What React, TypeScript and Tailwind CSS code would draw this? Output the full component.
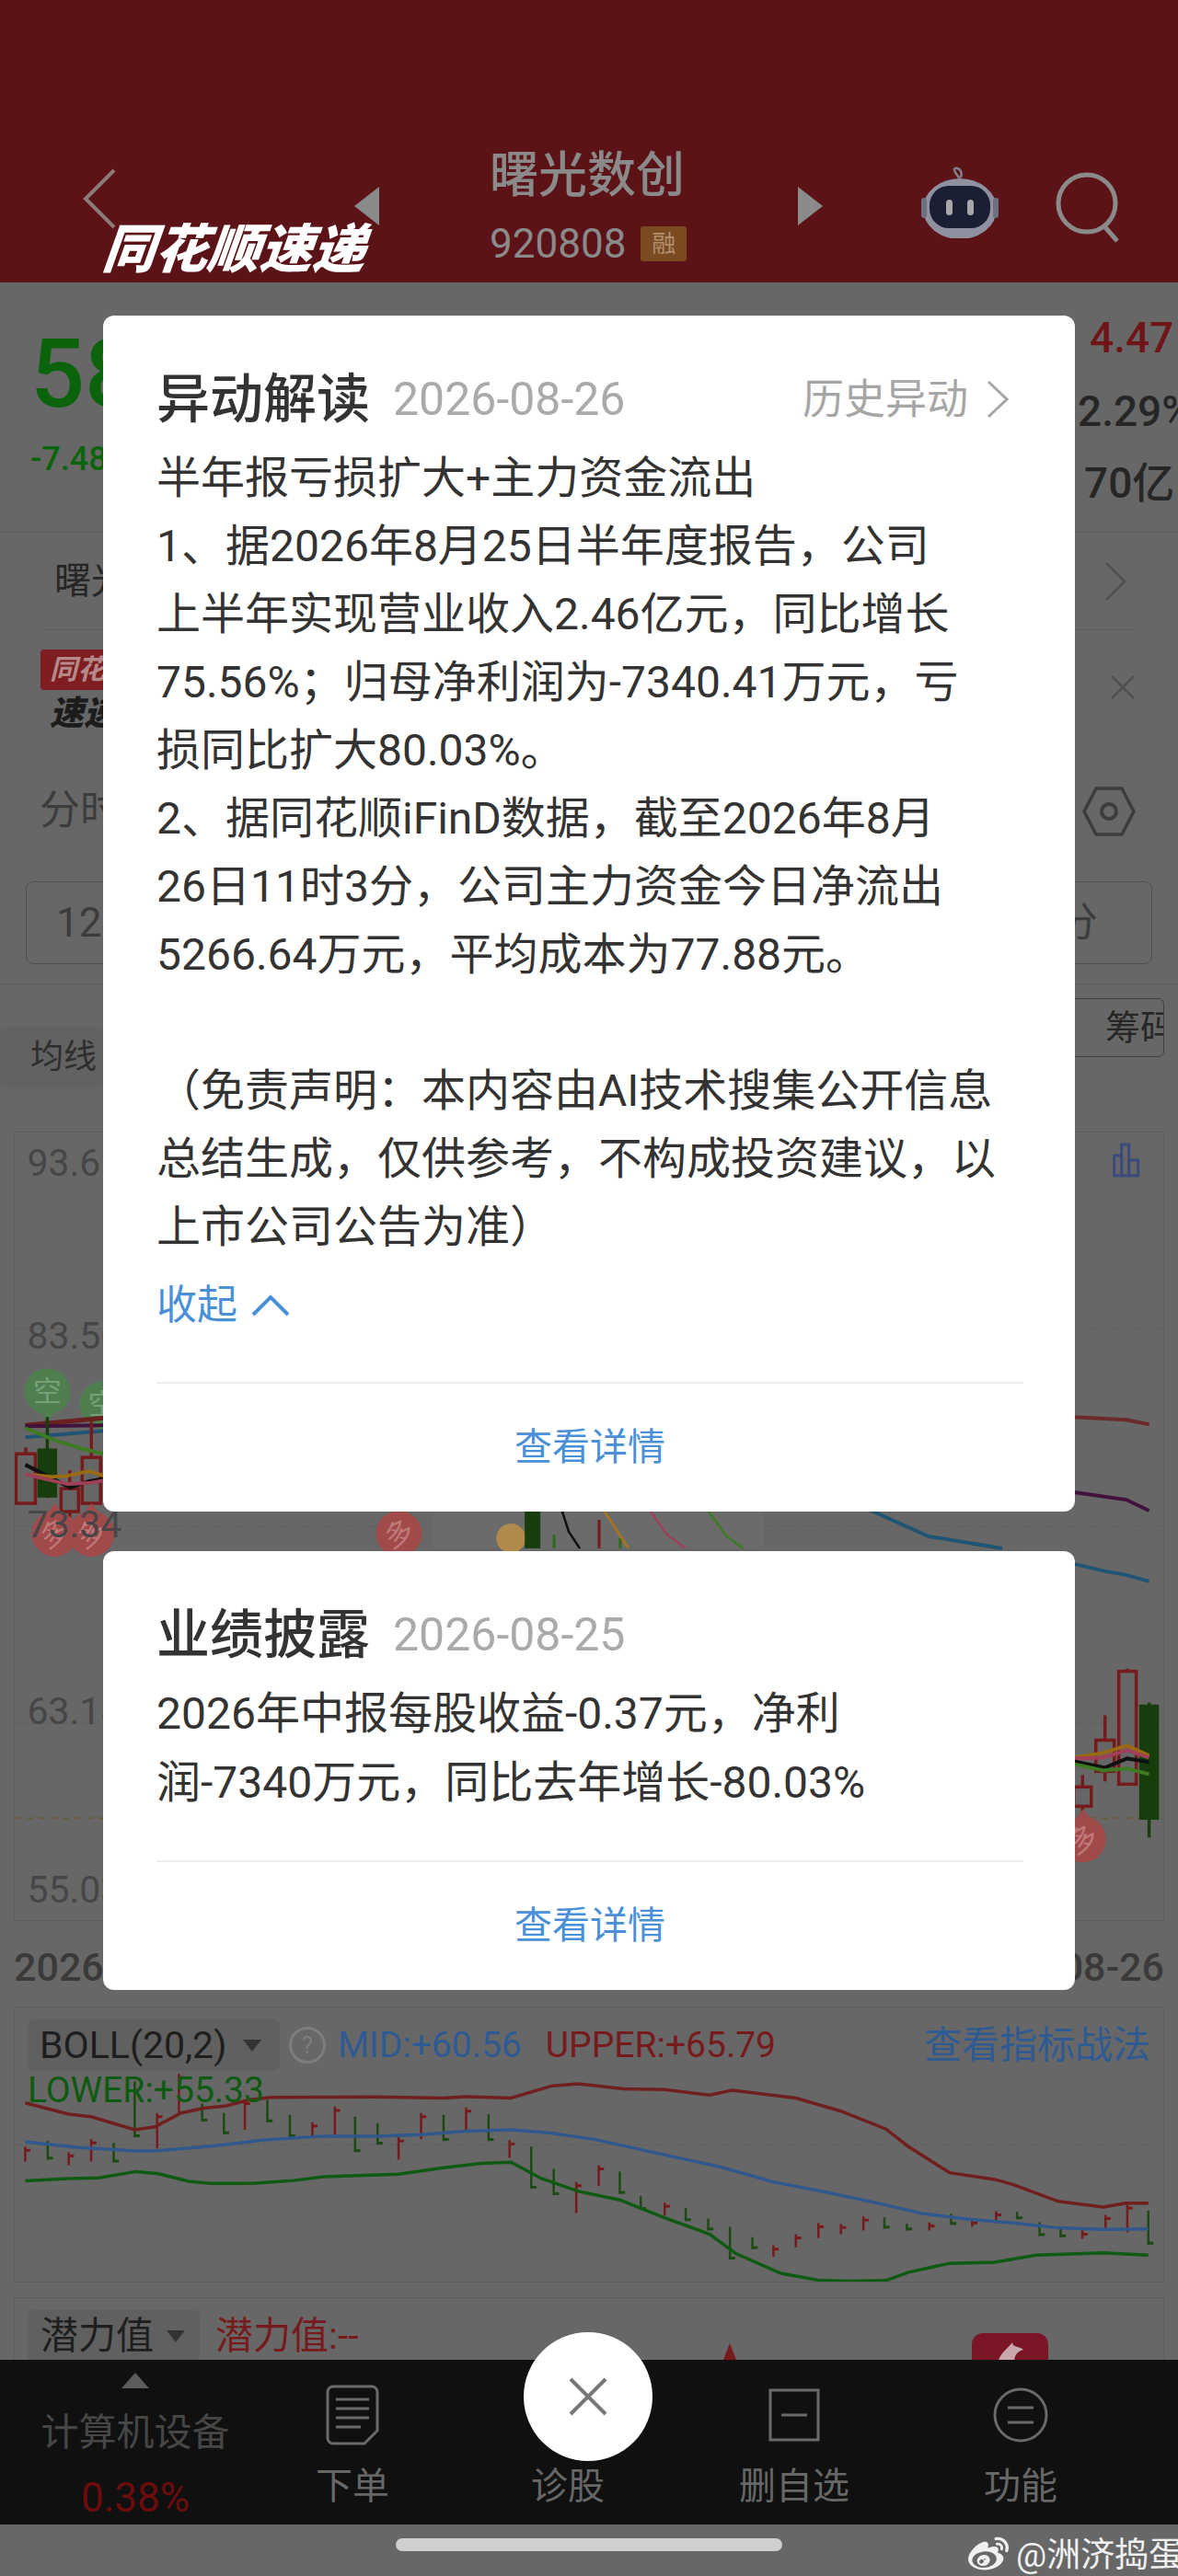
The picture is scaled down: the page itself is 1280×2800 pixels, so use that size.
import * as React from "react";
import { FaWeibo } from "react-icons/fa";

// small candles of the BOLL panel: x, top, bottom, tick y (same units as the viewBox)
const bollRed = [
  [32, 425, 465], [90, 440, 475], [120, 405, 465], [208, 335, 430], [237, 230, 340], [325, 300, 380],
  [415, 360, 395], [445, 318, 395], [530, 400, 460], [560, 335, 405], [620, 320, 385], [678, 408, 455],
  [767, 520, 603], [797, 475, 530], [885, 575, 610], [1030, 690, 720], [1060, 660, 695], [1090, 630, 670],
  [1120, 632, 660], [1150, 612, 650], [1238, 628, 650], [1295, 620, 640], [1327, 598, 630], [1442, 650, 672],
  [1473, 608, 650], [1502, 580, 655],
];
const bollGreen = [
  [62, 410, 460], [150, 415, 468], [178, 250, 400], [268, 310, 358], [297, 335, 392], [355, 300, 360],
  [385, 340, 400], [472, 345, 440], [502, 362, 420], [590, 340, 410], [650, 338, 410], [707, 425, 538],
  [737, 485, 555], [825, 492, 552], [853, 558, 595], [913, 590, 625], [943, 618, 650], [972, 640, 728],
  [1002, 668, 700], [1178, 615, 645], [1208, 632, 650], [1267, 605, 635], [1355, 600, 620], [1385, 628, 665],
  [1413, 645, 668], [1530, 597, 688],
];

const bollUpper =
  "32,308 90,338 120,345 178,380 205,372 240,335 270,322 300,316 330,300 360,293 500,292 590,295 620,291 680,295 735,262 770,257 830,270 885,272 945,287 975,274 1060,295 1120,330 1180,378 1210,425 1265,495 1325,513 1350,527 1410,572 1470,587 1500,577 1530,577";
const bollMid =
  "32,412 100,427 180,437 210,436 290,422 350,407 430,397 500,397 560,393 620,384 680,380 730,388 790,405 880,445 960,480 1030,520 1100,547 1170,577 1230,605 1290,620 1350,630 1410,643 1470,647 1530,646";
const bollLower =
  "32,517 90,511 130,509 180,492 210,498 250,518 280,524 340,523 390,516 430,506 530,499 590,482 640,470 680,467 720,510 770,545 825,568 880,612 945,660 980,712 1040,765 1090,783 1130,786 1180,784 1210,762 1265,738 1325,735 1380,716 1470,710 1530,716";

const Candle = ({ x, w, top, bottom, wt, wb, filled }: { x: number; w: number; top: number; bottom: number; wt: number; wb: number; filled?: boolean }) => {
  const color = filled ? "#173d0c" : "#761a1c";
  return (
    <g>
      <line x1={x + w / 2} x2={x + w / 2} y1={wt} y2={wb} stroke={color} strokeWidth={3.5} />
      <rect x={x} y={top} width={w} height={bottom - top} fill={filled ? color : "#666666"} stroke={color} strokeWidth={3.5} />
    </g>
  );
};

const Pin = ({ x, y, label, down }: { x: number; y: number; label: string; down?: boolean }) => (
  <g>
    <polygon
      points={down ? `${x - 9},${y + 21} ${x + 9},${y + 21} ${x},${y + 33}` : `${x - 9},${y - 21} ${x + 9},${y - 21} ${x},${y - 33}`}
      fill={down ? "#4f7f4f" : "#a04a4a"}
    />
    <circle cx={x} cy={y} r={25} fill={down ? "#4f7f4f" : "#a04a4a"} />
    <text
      x={x}
      y={y + 11}
      textAnchor="middle"
      fontSize={31}
      fill={down ? "#7aa07a" : "#c07a7a"}
      transform={down ? undefined : `rotate(-28 ${x} ${y})`}
    >
      {label}
    </text>
  </g>
);

const MainChart = () => (
  <svg viewBox="15 1230 1250 858" className="w-full h-full block">
    <g stroke="#5c5c5c" strokeWidth={1} strokeDasharray="3 3">
      <line x1={15} x2={1265} y1={1444} y2={1444} />
      <line x1={15} x2={1265} y1={1659} y2={1659} />
      <line x1={15} x2={1265} y1={1874} y2={1874} />
    </g>
    <line x1={15} x2={1265} y1={1977} y2={1977} stroke="#6d5a3c" strokeWidth={2} strokeDasharray="7 6" />

    {/* left side */}
    <Pin x={50} y={1512} label="空" down />
    <Pin x={110} y={1526} label="空" down />
    <polyline points="26,1549 112,1541" fill="none" stroke="#6a2020" strokeWidth={5} />
    <polyline points="26,1550 112,1549" fill="none" stroke="#41123c" strokeWidth={4} />
    <polyline points="26,1562 112,1555" fill="none" stroke="#205474" strokeWidth={4} />
    <Candle x={16} w={21} top={1580} bottom={1634} wt={1573} wb={1580} />
    <Candle x={41} w={18} top={1576} bottom={1626} wt={1540} wb={1628} filled />
    <Candle x={65} w={19} top={1618} bottom={1643} wt={1598} wb={1657} />
    <Candle x={88} w={20} top={1584} bottom={1634} wt={1545} wb={1634} />
    <polyline points="26,1552 60,1566 90,1575 112,1580" fill="none" stroke="#3d7a22" strokeWidth={4} />
    <polyline points="26,1592 50,1604 75,1617 95,1610 112,1607" fill="none" stroke="#101010" strokeWidth={4} />
    <polyline points="35,1603 55,1605 72,1604 95,1599 112,1604" fill="none" stroke="#9a6a12" strokeWidth={4} />
    <polyline points="26,1602 50,1608 72,1613 95,1612 112,1609" fill="none" stroke="#a04058" strokeWidth={4} />
    <Pin x={58} y={1667} label="多" />
    <Pin x={98} y={1667} label="多" />

    {/* the part showing between the two cards */}
    <rect x={470} y={1640} width={360} height={43} fill="#6b6b6b" />
    <Pin x={433} y={1667} label="多" />
    <circle cx={555} cy={1672} r={16} fill="#b08a4a" />
    <rect x={570} y={1640} width={17} height={43} fill="#173d0c" />
    <line x1={602} x2={602} y1={1668} y2={1683} stroke="#2d6a1c" strokeWidth={3} />
    <line x1={651} x2={651} y1={1652} y2={1683} stroke="#761a1c" strokeWidth={3} />
    <line x1={674} x2={674} y1={1672} y2={1683} stroke="#2d6a1c" strokeWidth={3} />
    <polyline points="610,1640 618,1665 630,1683" fill="none" stroke="#101010" strokeWidth={2.5} />
    <polyline points="655,1640 668,1660 683,1683" fill="none" stroke="#a8761c" strokeWidth={2.5} />
    <polyline points="705,1640 725,1668 745,1683" fill="none" stroke="#a04058" strokeWidth={2.5} />
    <polyline points="768,1640 790,1670 808,1683" fill="none" stroke="#3d7a22" strokeWidth={2.5} />
    <polyline points="943,1640 1010,1670 1090,1683" fill="none" stroke="#205474" strokeWidth={4} />

    {/* right side */}
    <polyline points="1168,1540 1225,1543 1250,1548" fill="none" stroke="#6a2a2a" strokeWidth={4} />
    <polyline points="1168,1622 1225,1630 1250,1642" fill="none" stroke="#41123c" strokeWidth={4} />
    <polyline points="1168,1700 1202,1708 1225,1712 1250,1719" fill="none" stroke="#205474" strokeWidth={4} />
    <Candle x={1168} w={19} top={1943} bottom={1964} wt={1930} wb={1970} />
    <Candle x={1192} w={20} top={1892} bottom={1926} wt={1865} wb={1937} />
    <Candle x={1217} w={19} top={1817} bottom={1940} wt={1814} wb={1940} />
    <Candle x={1241} w={18} top={1855} bottom={1977} wt={1851} wb={1998} filled />
    <polyline points="1168,1911 1200,1906 1226,1898 1250,1909" fill="none" stroke="#9a6a12" strokeWidth={4} />
    <polyline points="1168,1912 1200,1911 1226,1903 1250,1911" fill="none" stroke="#a04058" strokeWidth={4} />
    <polyline points="1168,1915 1202,1922 1226,1912 1250,1916" fill="none" stroke="#101010" strokeWidth={4} />
    <polyline points="1168,1918 1200,1925 1226,1923 1250,1929" fill="none" stroke="#3d7a22" strokeWidth={4} />
    <Pin x={1178} y={2000} label="多" />

    {/* bar icon */}
    <g fill="none" stroke="#3b4a7c" strokeWidth={3}>
      <rect x={1212} y={1255} width={8} height={22} />
      <rect x={1220} y={1243} width={8} height={34} />
      <rect x={1228} y={1260} width={10} height={17} />
    </g>

    <g stroke="#555555" strokeWidth={2}>
      <line x1={1178} x2={1178} y1={2091} y2={2103} />
      <line x1={1202} x2={1202} y1={2091} y2={2103} />
      <line x1={1226} x2={1226} y1={2091} y2={2103} />
    </g>

    <g fontSize={41} fill="#464646">
      <text x={28} y={1277}>93.65</text>
      <text x={28} y={1466}>83.50</text>
      <text x={28} y={1671}>73.34</text>
      <text x={28} y={1875}>63.18</text>
      <text x={28} y={2069}>55.03</text>
    </g>
  </svg>
);

const BollChart = () => (
  <svg viewBox="18 52 1532 735" preserveAspectRatio="none" className="w-full h-full block">
    <line x1={18} x2={1550} y1={420} y2={420} stroke="#5c5c5c" strokeWidth={1} strokeDasharray="3 3" vectorEffect="non-scaling-stroke" />
    {bollRed.map(([x, a, b]) => (
      <g key={x} stroke="#761a1c" strokeWidth={3} vectorEffect="non-scaling-stroke">
        <line x1={x} x2={x} y1={a} y2={b} vectorEffect="non-scaling-stroke" strokeWidth={2.5} />
        <line x1={x} x2={x + 7} y1={a + 10} y2={a + 10} vectorEffect="non-scaling-stroke" />
      </g>
    ))}
    {bollGreen.map(([x, a, b]) => (
      <g key={x} stroke="#1d4a12" strokeWidth={3}>
        <line x1={x} x2={x} y1={a} y2={b} vectorEffect="non-scaling-stroke" strokeWidth={2.5} />
        <line x1={x} x2={x + 7} y1={b - 4} y2={b - 4} vectorEffect="non-scaling-stroke" />
      </g>
    ))}
    <polyline points={bollUpper} fill="none" stroke="#701f1f" strokeWidth={3.5} vectorEffect="non-scaling-stroke" />
    <polyline points={bollMid} fill="none" stroke="#30588c" strokeWidth={3.5} vectorEffect="non-scaling-stroke" />
    <polyline points={bollLower} fill="none" stroke="#0f5a12" strokeWidth={3.5} vectorEffect="non-scaling-stroke" />
  </svg>
);

const RobotIcon = () => (
  <svg width="86" height="78" viewBox="0 0 86 78">
    <path d="M43 14 C40 8 36 6 37 2 M37 2 C43 1 46 6 44 12" fill="none" stroke="#80828f" strokeWidth={2.5} />
    <ellipse cx="43" cy="46" rx="40" ry="33" fill="#8f91a0" />
    <rect x="1" y="34" width="6" height="22" rx="3" fill="#6e7080" />
    <rect x="79" y="34" width="6" height="22" rx="3" fill="#6e7080" />
    <rect x="10" y="21" width="66" height="46" rx="21" fill="#1a1f33" />
    <rect x="28" y="36" width="7" height="17" rx="3.5" fill="#a8a8a8" />
    <rect x="51" y="36" width="7" height="17" rx="3.5" fill="#a8a8a8" />
  </svg>
);

const CardHead = ({ title, date, extra }: { title: string; date: string; extra?: boolean }) => (
  <div className="flex items-center h-[74px]">
    <span className="text-[58px] font-medium text-[#333] leading-none">{title}</span>
    <span className="ml-[25px] text-[50px] text-[#aaaaaa] leading-none">{date}</span>
    {extra && (
      <div className="ml-auto flex items-center mr-[16px]">
        <span className="text-[45px] text-[#a6a6a6] leading-none">历史异动</span>
        <svg width="24" height="42" viewBox="0 0 24 42" className="ml-[20px]">
          <polyline points="2,2 22,21 2,40" fill="none" stroke="#a6a6a6" strokeWidth={3} />
        </svg>
      </div>
    )}
  </div>
);

const CardFoot = () => (
  <div className="h-[141px] border-t-2 border-[#eeeeee] flex items-center justify-center">
    <span className="text-[41px] text-[#4a90d9] leading-none">查看详情</span>
  </div>
);

const lines = [
  "半年报亏损扩大+主力资金流出",
  "1、据2026年8月25日半年度报告，公司",
  "上半年实现营业收入2.46亿元，同比增长",
  "75.56%；归母净利润为-7340.41万元，亏",
  "损同比扩大80.03%。",
  "2、据同花顺iFinD数据，截至2026年8月",
  "26日11时3分，公司主力资金今日净流出",
  "5266.64万元，平均成本为77.88元。",
  "\u00a0",
  "（免责声明：本内容由AI技术搜集公开信息",
  "总结生成，仅供参考，不构成投资建议，以",
  "上市公司公告为准）",
];

const NavItem = ({ label, icon }: { label: string; icon: React.ReactNode }) => (
  <div className="w-[200px] flex flex-col items-center">
    <div className="h-[72px] flex items-center justify-center">{icon}</div>
    <span className="mt-[22px] text-[40px] leading-none text-[#676767]">{label}</span>
  </div>
);

export default function App() {
  return (
    <div className="relative w-[1280px] h-[2800px] overflow-hidden bg-[#676767] font-['Roboto','Noto_Sans_CJK_SC',sans-serif]">
      {/* stock header */}
      <div className="relative h-[307px] bg-[#5b1317] flex items-start pt-[166px] pl-[90px]">
        <svg width="36" height="66" viewBox="0 0 36 66" className="mt-[17px]">
          <polyline points="34,2 3,33 34,64" fill="none" stroke="#8f7a7a" strokeWidth={4} />
        </svg>
        <div className="ml-[259px] mt-[37px] w-0 h-0 border-y-[21px] border-y-transparent border-r-[27px] border-r-[#8a8a8a]" />
        <div className="ml-[120px] w-[335px]">
          <div className="text-[53px] leading-[50px] text-[#8a8a8a] font-medium">曙光数创</div>
          <div className="mt-[29px] flex items-center">
            <span className="text-[44px] leading-[40px] text-[#8a8a8a]">920808</span>
            <span className="ml-[16px] w-[50px] h-[38px] bg-[#7a4a20] rounded-[3px] text-[26px] leading-[38px] text-center text-[#b09070]">融</span>
          </div>
        </div>
        <div className="mt-[37px] w-0 h-0 border-y-[21px] border-y-transparent border-l-[27px] border-l-[#8a8a8a]" />
        <div className="ml-[106px] mt-[15px]">
          <RobotIcon />
        </div>
        <svg width="72" height="78" viewBox="0 0 72 78" className="ml-[60px] mt-[20px]">
          <circle cx="35" cy="35" r="31" fill="none" stroke="#8a8a8a" strokeWidth={5} />
          <line x1="54" y1="60" x2="68" y2="76" stroke="#8a8a8a" strokeWidth={5} />
        </svg>
        <div className="absolute left-[112px] top-[242px] text-[57px] leading-[60px] font-black italic text-white -skew-x-6 whitespace-nowrap">同花顺速递</div>
      </div>

      {/* quote */}
      <div className="h-[272px] flex justify-between border-b border-[#5e5e5e]">
        <div className="pl-[33px]">
          <div className="mt-[52px] text-[104px] leading-[96px] font-medium text-[#0b640b]">58</div>
          <div className="mt-[24px] text-[36px] leading-[40px] font-medium text-[#0b640b]">-7.48</div>
        </div>
        <div className="w-[112px] pl-[16px] whitespace-nowrap">
          <div className="mt-[36px] text-[46px] leading-[48px] font-medium text-[#6f1518]">4.47</div>
          <div className="mt-[32px] -ml-[13px] text-[46px] leading-[48px] font-medium text-[#262626]">2.29%</div>
          <div className="mt-[30px] -ml-[6px] text-[46px] leading-[48px] font-medium text-[#262626]">70亿</div>
        </div>
      </div>

      {/* news rows */}
      <div className="h-[106px] mx-[44px] flex items-center justify-between border-b border-[#5e5e5e]">
        <span className="ml-[15px] text-[40px] text-[#262626]">曙光</span>
        <svg width="24" height="44" viewBox="0 0 24 44" className="mr-[12px]">
          <polyline points="2,2 22,22 2,42" fill="none" stroke="#505050" strokeWidth={2.5} />
        </svg>
      </div>
      <div className="h-[125px] flex items-start justify-between pl-[44px] pr-[46px]">
        <div className="mt-[21px]">
          <div className="w-[110px] h-[44px] bg-[#7f1d20] rounded-[4px] text-[30px] leading-[44px] pl-[10px] italic font-bold text-[#b5898a]">同花</div>
          <div className="mt-[4px] pl-[10px] text-[37px] leading-[44px] italic font-black text-[#1c1c1c]">速递</div>
        </div>
        <svg width="28" height="28" viewBox="0 0 28 28" className="mt-[48px]">
          <path d="M2 2 L26 26 M26 2 L2 26" stroke="#505050" strokeWidth={2.5} />
        </svg>
      </div>

      {/* period tabs */}
      <div className="h-[148px] pl-[43px] pr-[46px] flex items-start justify-between">
        <span className="mt-[43px] text-[44px] leading-[56px] text-[#3c3c3c]">分时</span>
        <svg width="58" height="54" viewBox="0 0 58 54" className="mt-[45px]">
          <polygon points="15,2 43,2 56,27 43,52 15,52 2,27" fill="none" stroke="#3c3c3c" strokeWidth={3.5} />
          <circle cx="29" cy="27" r="8" fill="none" stroke="#3c3c3c" strokeWidth={4} />
        </svg>
      </div>
      <div className="h-[112px] border-b border-[#5e5e5e] px-[28px]">
        <div className="h-[90px] border border-[#505050] rounded-[8px] flex items-center justify-between pl-[32px] pr-[58px]">
          <span className="text-[44px] text-[#3c3c3c]">120</span>
          <span className="text-[44px] text-[#3c3c3c]">分</span>
        </div>
      </div>

      {/* indicator chips */}
      <div className="h-[160px] flex items-start justify-between">
        <div className="mt-[46px] w-[112px] h-[67px] bg-[#626262] rounded-[6px] pl-[33px] text-[36px] leading-[67px] text-[#2e2e2e]">均线</div>
        <div className="mt-[15px] mr-[15px] w-[112px] h-[64px] border border-[#404040] rounded-[6px] pl-[47px] text-[38px] leading-[62px] text-[#262626] whitespace-nowrap overflow-hidden">筹码</div>
      </div>

      {/* main chart */}
      <div className="h-[858px] mx-[15px] border border-[#5e5e5e]">
        <MainChart />
      </div>
      <div className="h-[93px] px-[15px] flex items-start justify-between">
        <span className="mt-[25px] text-[43px] leading-[50px] font-medium text-[#3a3a3a]">2026-</span>
        <span className="mt-[25px] text-[43px] leading-[50px] font-medium text-[#3a3a3a]">08-26</span>
      </div>

      {/* BOLL */}
      <div className="relative h-[300px] mx-[15px] border border-[#5e5e5e]">
        <BollChart />
        <div className="absolute left-[14px] top-[13px] right-[14px] flex items-center h-[56px]">
          <div className="w-[274px] h-[56px] bg-[#606060] rounded-[6px] flex items-center pl-[13px]">
            <span className="text-[41px] leading-none text-[#1e1e1e]">BOLL(20,2)</span>
            <span className="ml-[18px] w-0 h-0 border-x-[10px] border-x-transparent border-t-[13px] border-t-[#333]" />
          </div>
          <span className="ml-[10px] w-[40px] h-[40px] rounded-full border-[3px] border-[#7e7e7e] text-[26px] leading-[34px] text-center text-[#7e7e7e]">?</span>
          <span className="ml-[13px] text-[39px] leading-none text-[#2e5a94]">MID:+60.56</span>
          <span className="ml-[26px] text-[39px] leading-none text-[#761a1c]">UPPER:+65.79</span>
          <span className="ml-auto text-[41px] leading-none text-[#2e5a94]">查看指标战法</span>
        </div>
        <div className="absolute left-[14px] top-[68px] text-[39px] leading-[44px] text-[#0f5a12]">LOWER:+55.33</div>
      </div>

      {/* potential panel */}
      <div className="relative mt-[16px] h-[68px] mx-[15px] border-x border-t border-[#5e5e5e] overflow-hidden">
        <div className="flex items-start mt-[13px] ml-[14px]">
          <div className="w-[187px] h-[56px] bg-[#606060] rounded-[6px] flex items-center pl-[14px]">
            <span className="text-[41px] leading-none text-[#1e1e1e]">潜力值</span>
            <span className="ml-[14px] w-0 h-0 border-x-[10px] border-x-transparent border-t-[13px] border-t-[#333]" />
          </div>
          <span className="ml-[17px] text-[41px] leading-[56px] text-[#761a1c]">潜力值:--</span>
        </div>
        <div className="absolute left-[770px] bottom-0 w-0 h-0 border-x-[7px] border-x-transparent border-b-[18px] border-b-[#761a1c]" />
        <div className="absolute left-[1040px] top-[38px] w-[83px] h-[60px] bg-[#7a1626] rounded-[12px] flex justify-center pt-[8px]">
          <svg width="36" height="24" viewBox="0 0 36 24">
            <path d="M4 24 C8 12 14 10 20 2 C20 8 28 6 32 10 C24 12 22 18 22 24 Z" fill="#c9a8ac" />
          </svg>
        </div>
      </div>

      {/* bottom bar */}
      <div className="h-[179px] bg-[#101010] flex items-start">
        <div className="w-[294px] flex flex-col items-center">
          <div className="mt-[14px] w-0 h-0 border-x-[15px] border-x-transparent border-b-[17px] border-b-[#5c5c5c]" />
          <span className="mt-[26px] text-[41px] leading-[44px] text-[#464646]">计算机设备</span>
          <span className="mt-[27px] text-[44px] leading-[44px] text-[#6d0c0c]">0.38%</span>
        </div>
        <div className="flex -ml-[23px] mt-[24px]">
          <div className="-ml-[-12px]">
            <NavItem
              label="下单"
              icon={
                <svg width="58" height="66" viewBox="0 0 58 66" fill="none" stroke="#6a6a6a" strokeWidth={3}>
                  <path d="M8 2 H50 a6 6 0 0 1 6 6 V50 L42 64 H8 a6 6 0 0 1 -6 -6 V8 a6 6 0 0 1 6 -6 Z" />
                  <path d="M11 16 H47 M11 26 H47 M11 36 H47 M11 46 H38" />
                </svg>
              }
            />
          </div>
          <div className="ml-[34px]">
            <NavItem label="诊股" icon={<span />} />
          </div>
          <div className="ml-[46px]">
            <NavItem
              label="删自选"
              icon={
                <svg width="56" height="58" viewBox="0 0 56 58" fill="none" stroke="#6a6a6a" strokeWidth={3}>
                  <rect x="2" y="2" width="52" height="54" />
                  <path d="M14 29 H42" />
                </svg>
              }
            />
          </div>
          <div className="ml-[46px]">
            <NavItem
              label="功能"
              icon={
                <svg width="60" height="60" viewBox="0 0 60 60" fill="none" stroke="#6a6a6a" strokeWidth={3}>
                  <circle cx="30" cy="30" r="28" />
                  <path d="M16 22 H44 M16 38 H44" />
                </svg>
              }
            />
          </div>
        </div>
      </div>

      {/* home indicator */}
      <div className="h-[56px] flex justify-center pt-[15px]">
        <div className="w-[420px] h-[14px] rounded-full bg-[#cfcfcf]" />
      </div>

      {/* watermark */}
      <div className="absolute left-[1052px] top-[2757px] flex items-center h-[40px] text-[#f0f0f0]">
        <FaWeibo size={44} />
        <span className="ml-[8px] text-[37px] leading-none whitespace-nowrap">@洲济捣蛋</span>
      </div>

      {/* modal cards */}
      <div className="absolute left-[112px] top-[343px] w-[1056px] flex flex-col gap-[43px]">
        <div className="bg-white rounded-[12px] pl-[58px] pr-[56px] pt-[54px]">
          <CardHead title="异动解读" date="2026-08-26" extra />
          <div className="mt-[12px] text-[48px] leading-[74px] text-[#333] whitespace-nowrap">
            {lines.map((l, i) => (
              <div key={i}>{l}</div>
            ))}
          </div>
          <div className="mt-[11px] h-[74px] flex items-center">
            <span className="text-[44px] leading-none text-[#4a90d9]">收起</span>
            <svg width="42" height="24" viewBox="0 0 42 24" className="ml-[15px]">
              <polyline points="2,22 21,3 40,22" fill="none" stroke="#4a90d9" strokeWidth={4} />
            </svg>
          </div>
          <div className="mt-[46px]">
            <CardFoot />
          </div>
        </div>
        <div className="bg-white rounded-[12px] pl-[58px] pr-[56px] pt-[54px]">
          <CardHead title="业绩披露" date="2026-08-25" />
          <div className="mt-[11px] text-[48px] leading-[75px] text-[#333] whitespace-nowrap">
            <div>2026年中报每股收益-0.37元，净利</div>
            <div>润-7340万元，同比去年增长-80.03%</div>
          </div>
          <div className="mt-[47px]">
            <CardFoot />
          </div>
        </div>
      </div>

      {/* close button */}
      <div className="absolute left-[569px] top-[2535px] w-[140px] h-[140px] rounded-full bg-white flex items-center justify-center">
        <svg width="42" height="42" viewBox="0 0 42 42">
          <path d="M2 2 L40 40 M40 2 L2 40" stroke="#777777" strokeWidth={4} />
        </svg>
      </div>
    </div>
  );
}
